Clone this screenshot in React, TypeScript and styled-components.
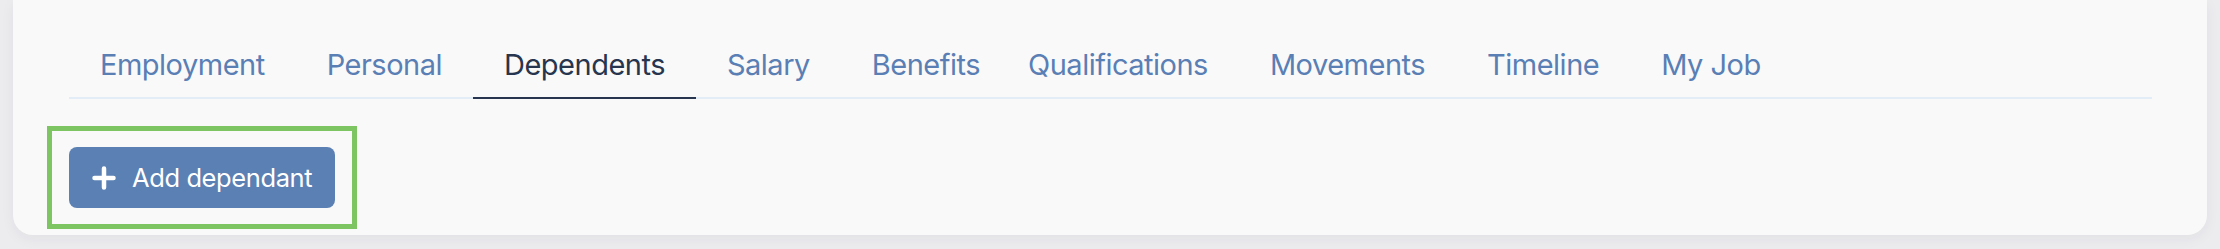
import React, { useState } from "react";
import styled, { createGlobalStyle } from "styled-components";

const GlobalStyle = createGlobalStyle`
  html, body {
    margin: 0;
    padding: 0;
    background: #ececef;
  }
  body {
    font-family: Inter, "Noto Sans", "Liberation Sans", sans-serif;
  }
`;

const Page = styled.div`
  padding: 0 13px 14px;
`;

const Card = styled.section`
  background: #f9f9f9;
  border-radius: 0 0 20px 20px;
  box-shadow: 0 4px 14px rgba(30, 40, 60, 0.05);
  padding: 47px 55px 6px 56px;
`;

const TabList = styled.ul`
  display: flex;
  margin: 0;
  padding: 0;
  list-style: none;
  border-bottom: 2px solid #e3edf8;
`;

const Tab = styled.li<{ $active?: boolean; $narrow?: boolean }>`
  padding: 0 ${(p) => (p.$narrow ? "17px" : "31px")} 14px 31px;
  margin-bottom: -2px;
  font-size: 29px;
  line-height: 36px;
  letter-spacing: -0.5px;
  color: ${(p) => (p.$active ? "#27354f" : "#5a7fb5")};
  border-bottom: 2px solid ${(p) => (p.$active ? "#27354f" : "transparent")};
  cursor: pointer;
  white-space: nowrap;
`;

/* the green outline is a review highlight drawn around the button */
const Actions = styled.div`
  margin: 27px 0 0 -22px;
  display: flex;
`;

const Highlight = styled.div`
  display: inline-flex;
  border: 5px solid #7dc462;
  padding: 16px 17px;
`;

const AddButton = styled.button`
  display: inline-flex;
  align-items: center;
  gap: 16px;
  height: 61px;
  padding: 0 23px 0 23px;
  border: none;
  border-radius: 8px;
  background: #5b80b3;
  color: #ffffff;
  font-family: inherit;
  font-size: 25.5px;
  font-weight: 400;
  letter-spacing: -0.4px;
  cursor: pointer;
`;

const PlusIcon = () => (
  <svg width="24" height="24" viewBox="0 0 24 24" fill="none">
    <path
      d="M12 2.5v19M2.5 12h19"
      stroke="#ffffff"
      strokeWidth="4.5"
      strokeLinecap="round"
    />
  </svg>
);

const tabs = [
  { label: "Employment" },
  { label: "Personal" },
  { label: "Dependents" },
  { label: "Salary" },
  { label: "Benefits", narrow: true },
  { label: "Qualifications" },
  { label: "Movements" },
  { label: "Timeline" },
  { label: "My Job" },
];

export default function App() {
  const [active, setActive] = useState("Dependents");

  return (
    <Page>
      <GlobalStyle />
      <Card>
        <TabList>
          {tabs.map((t) => (
            <Tab
              key={t.label}
              $active={t.label === active}
              $narrow={t.narrow}
              onClick={() => setActive(t.label)}
            >
              {t.label}
            </Tab>
          ))}
        </TabList>
        <Actions>
          <Highlight>
            <AddButton>
              <PlusIcon />
              Add dependant
            </AddButton>
          </Highlight>
        </Actions>
      </Card>
    </Page>
  );
}
